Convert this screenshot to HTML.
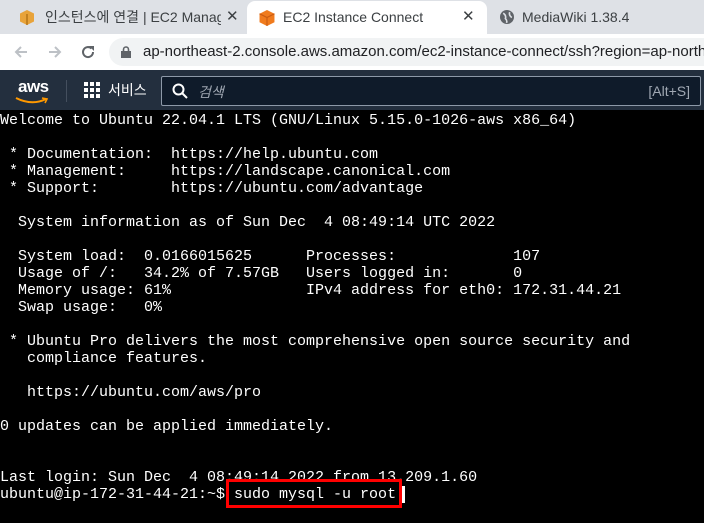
<!DOCTYPE html>
<html><head><meta charset="utf-8"><style>
*{margin:0;padding:0;box-sizing:border-box}
html,body{width:704px;height:523px;overflow:hidden}
body{background:#000;font-family:"Liberation Sans","Noto Sans CJK KR",sans-serif;position:relative}
.tabs{position:absolute;left:0;top:0;width:704px;height:34px;background:#dee1e6;overflow:hidden}
.tab{position:absolute;top:0;height:34px;font-size:14px;color:#3c4043;line-height:34px}
.active{background:#fff;border-radius:8px 8px 0 0;left:247px;width:240px;top:1px;height:33px;line-height:32px}
.addr{position:absolute;top:34px;left:0;width:704px;height:36px;background:#fff;overflow:hidden}
.url{position:absolute;left:109px;top:4px;width:595px;height:28px;background:#f1f3f4;border-radius:14px 0 0 14px;font-size:15px;line-height:28px;padding-left:34px;color:#202124;white-space:nowrap;overflow:hidden}
.aws{position:absolute;top:70px;left:0;width:704px;height:40px;background:#232f3e;color:#fff}
.term{position:absolute;top:112px;left:0;width:704px;overflow:hidden;font-family:"Liberation Mono",monospace;font-size:15px;line-height:17px;color:#fff;white-space:pre}
</style></head><body>
<div class="tabs">
 <div class="tab" style="left:0;width:247px">
  <svg style="position:absolute;left:20px;top:10px" width="14" height="15" viewBox="0 0 14 15"><path d="M7 0L14 3.5V11.5L7 15L0 11.5V3.5Z" fill="#e8a33a"/><path d="M7 4V15" stroke="#b57516" stroke-width="1.5"/></svg>
  <span style="position:absolute;left:45px;white-space:nowrap;width:176px;overflow:hidden">인스턴스에 연결 | EC2 Management</span>
  <span style="position:absolute;left:226px;font-size:15px">✕</span>
 </div>
 <div class="tab active">
  <svg style="position:absolute;left:12px;top:9px" width="16" height="16" viewBox="0 0 14 15"><path d="M7 0L14 3.5V11.5L7 15L0 11.5V3.5Z" fill="#f07b1d"/><path d="M0 3.5L7 7L14 3.5M7 7V15" stroke="#c85a10" fill="none"/></svg>
  <span style="position:absolute;left:36px">EC2 Instance Connect</span>
  <span style="position:absolute;left:215px;font-size:15px">✕</span>
 </div>
 <div class="tab" style="left:500px;width:204px">
  <svg style="position:absolute;left:0;top:10px" width="14" height="14" viewBox="0 0 13 13"><circle cx="6.5" cy="6.5" r="6.5" fill="#5f6368"/><path d="M3 3Q6 5 5 8Q7 10 6 12M9 2Q8 5 11 7" stroke="#dee1e6" stroke-width="1.5" fill="none"/></svg>
  <span style="position:absolute;left:22px">MediaWiki 1.38.4</span>
 </div>
</div>
<div class="addr">
 <svg style="position:absolute;left:13px;top:10px" width="16" height="16" viewBox="0 0 16 16"><path d="M14 8H3M8 3L3 8L8 13" stroke="#bdc1c6" stroke-width="2" fill="none"/></svg>
 <svg style="position:absolute;left:47px;top:10px" width="16" height="16" viewBox="0 0 16 16"><path d="M2 8H13M8 3L13 8L8 13" stroke="#bdc1c6" stroke-width="2" fill="none"/></svg>
 <svg style="position:absolute;left:80px;top:10px" width="16" height="16" viewBox="0 0 16 16"><path d="M13 8A5 5 0 1 1 11.5 4.5" stroke="#5f6368" stroke-width="2" fill="none"/><path d="M9 2H14V7Z" fill="#5f6368"/></svg>
 <div class="url"><svg style="position:absolute;left:12px;top:8px" width="10" height="12" viewBox="0 0 10 12"><rect x="0" y="5" width="10" height="7" fill="#5f6368"/><path d="M2.5 5V3.5A2.5 2.5 0 0 1 7.5 3.5V5" stroke="#5f6368" stroke-width="1.6" fill="none"/></svg>ap-northeast-2.console.aws.amazon.com/ec2-instance-connect/ssh?region=ap-northeast-2</div>
</div>
<div class="aws">
 <div style="position:absolute;left:18px;top:7px;font-size:17px;font-weight:bold;letter-spacing:-0.5px">aws</div>
 <svg style="position:absolute;left:15px;top:27px" width="34" height="8" viewBox="0 0 34 8"><path d="M1 1Q17 9 31 2" stroke="#f90" stroke-width="2" fill="none"/><path d="M27 1L32 2L30 6" stroke="#f90" stroke-width="1.6" fill="none"/></svg>
 <div style="position:absolute;left:66px;top:10px;width:1px;height:22px;background:#444f5e"></div>
 <svg style="position:absolute;left:84px;top:12px" width="16" height="16" viewBox="0 0 16 16" fill="#fff"><rect x="0" y="0" width="4" height="4"/><rect x="6" y="0" width="4" height="4"/><rect x="12" y="0" width="4" height="4"/><rect x="0" y="6" width="4" height="4"/><rect x="6" y="6" width="4" height="4"/><rect x="12" y="6" width="4" height="4"/><rect x="0" y="12" width="4" height="4"/><rect x="6" y="12" width="4" height="4"/><rect x="12" y="12" width="4" height="4"/></svg>
 <div style="position:absolute;left:108px;top:10px;font-size:14px">서비스</div>
 <div style="position:absolute;left:161px;top:6px;width:540px;height:30px;background:#0f1b2a;border:1px solid #8d99a8;border-radius:2px">
  <svg style="position:absolute;left:10px;top:6px" width="16" height="16" viewBox="0 0 16 16"><circle cx="6.5" cy="6.5" r="5" stroke="#fff" stroke-width="2" fill="none"/><path d="M10 10L15 15" stroke="#fff" stroke-width="2"/></svg>
  <span style="position:absolute;left:36px;top:5px;font-size:14px;color:#a0a8b3;font-style:italic">검색</span>
  <span style="position:absolute;right:10px;top:6px;font-size:14px;color:#a0a8b3">[Alt+S]</span>
 </div>
</div>
<div class="term">Welcome to Ubuntu 22.04.1 LTS (GNU/Linux 5.15.0-1026-aws x86_64)

 * Documentation:  https://help.ubuntu.com
 * Management:     https://landscape.canonical.com
 * Support:        https://ubuntu.com/advantage

  System information as of Sun Dec  4 08:49:14 UTC 2022

  System load:  0.0166015625      Processes:             107
  Usage of /:   34.2% of 7.57GB   Users logged in:       0
  Memory usage: 61%               IPv4 address for eth0: 172.31.44.21
  Swap usage:   0%

 * Ubuntu Pro delivers the most comprehensive open source security and
   compliance features.

   https://ubuntu.com/aws/pro

0 updates can be applied immediately.


Last login: Sun Dec  4 08:49:14 2022 from 13.209.1.60
ubuntu@ip-172-31-44-21:~$ sudo mysql -u root</div>
<div style="position:absolute;left:402px;top:486px;width:3px;height:17px;background:#fff"></div>
<div style="position:absolute;left:226px;top:479px;width:176px;height:29px;border:3px solid #f00"></div>
</body></html>
